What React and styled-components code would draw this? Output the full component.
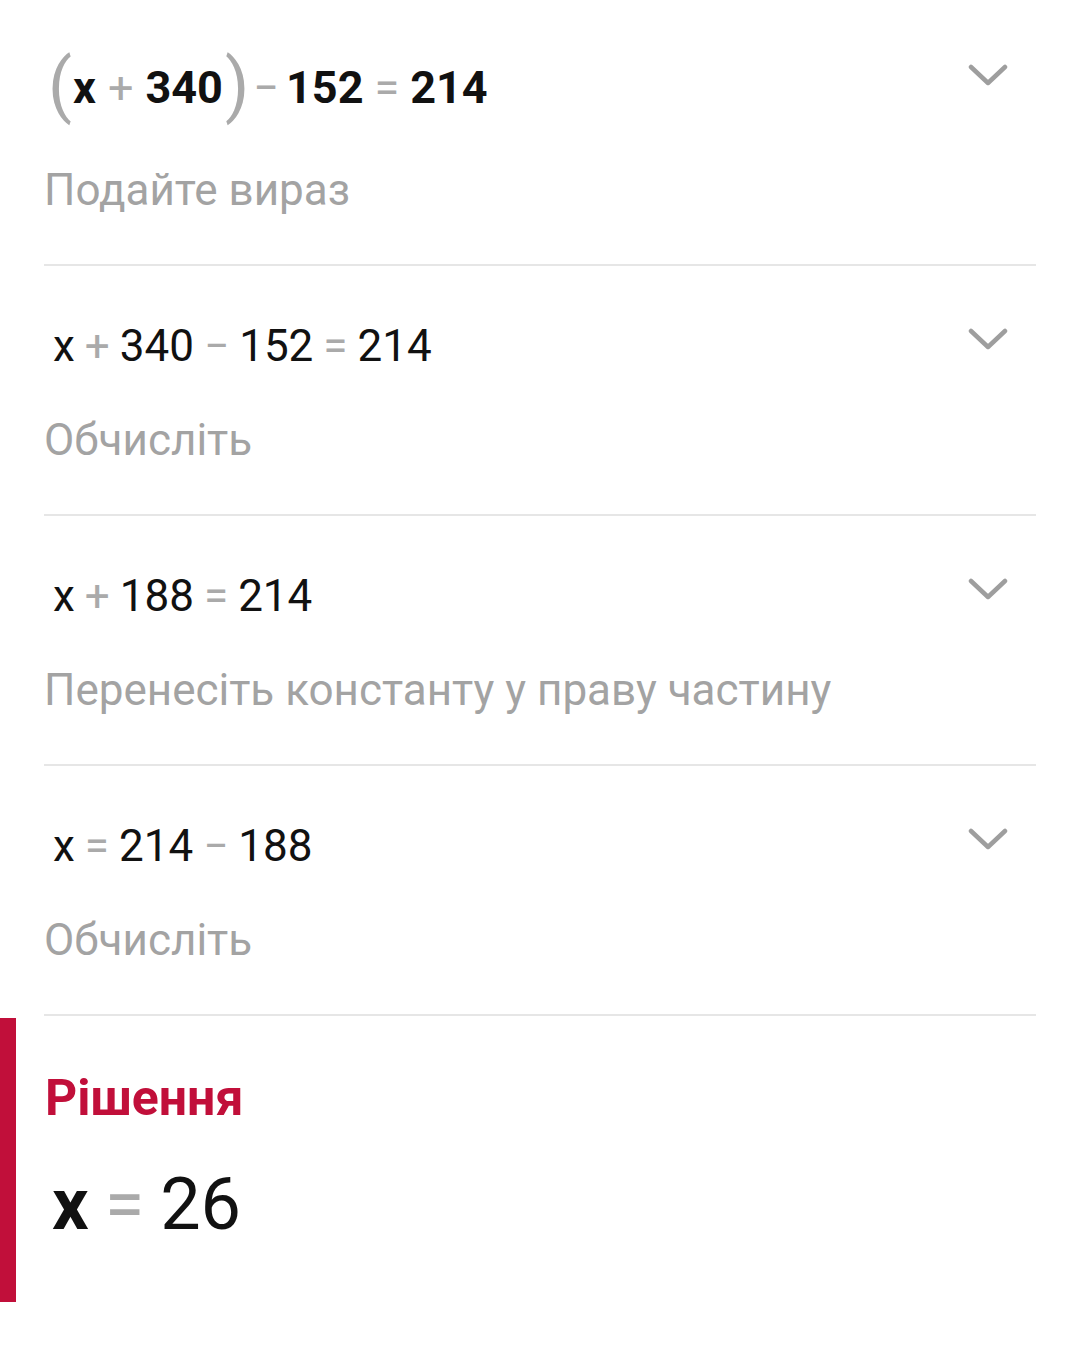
import React from "react";
import styled, { createGlobalStyle } from "styled-components";

const Global = createGlobalStyle`
  html, body { margin: 0; padding: 0; background: #fff; }
  body { font-family: Roboto, "Noto Sans", Arial, sans-serif; color: #111; }
`;

const Page = styled.div`
  width: 1080px;
  min-height: 1348px;
  background: #fff;
`;

const Steps = styled.div`
  padding: 0 44px;
`;

const Step = styled.section`
  border-bottom: 2px solid #e6e6e6;
  padding: ${(p) => (p.$first ? "38px 0 44px" : "50px 0 44px")};
`;

const Head = styled.div`
  display: flex;
  align-items: flex-start;
  justify-content: space-between;
`;

const Math = styled.div`
  display: flex;
  align-items: center;
  font-size: ${(p) => (p.$bold ? "45px" : "44px")};
  font-weight: ${(p) => (p.$bold ? 700 : 400)};
  line-height: ${(p) => (p.$bold ? "100px" : "60px")};
  padding-left: ${(p) => (p.$bold ? "4px" : "9px")};
  color: #111;
  white-space: pre;
`;

const Op = styled.span`
  color: #aaa;
  font-weight: 400;
  margin: ${(p) => p.$m || "0 10px"};
`;

const Paren = styled.span`
  color: #aaa;
  font-weight: 400;
  font-size: 70px;
  line-height: 100px;
  display: inline-block;
  margin: ${(p) => p.$m};
  position: relative;
  top: -3px;
`;

const Chevron = styled.button`
  border: 0;
  background: none;
  padding: 0;
  margin: ${(p) => (p.$first ? "26px 28px 0 0" : "12px 28px 0 0")};
  width: 40px;
  height: 22px;
  display: flex;
  cursor: pointer;
`;

const Hint = styled.div`
  font-size: 44px;
  line-height: 60px;
  color: #a3a3a3;
  margin-top: ${(p) => (p.$first ? "22px" : "34px")};
`;

const Solution = styled.section`
  margin-top: 2px;
  border-left: 16px solid #c10f3a;
  padding: 50px 0 44px 29px;
  height: 284px;
  box-sizing: border-box;
`;

const SolTitle = styled.h2`
  margin: 0;
  font-size: 50px;
  font-weight: 700;
  line-height: 60px;
  color: #c10f3a;
`;

const Answer = styled.div`
  margin-top: 32px;
  padding-left: 7px;
  font-size: 72px;
  line-height: 90px;
  color: #111;
  display: flex;
  align-items: center;
`;

const AnsX = styled.span`
  font-weight: 700;
`;

const AnsEq = styled.span`
  color: #aaa;
  margin: 0 16px;
`;

const ChevronIcon = () => (
  <svg width="40" height="22" viewBox="0 0 40 22" fill="none">
    <path d="M3 3 L20 19 L37 3" stroke="#9e9e9e" strokeWidth="4.5" strokeLinecap="round" strokeLinejoin="round" />
  </svg>
);

const O = ({ children, m }) => <Op $m={m}>{children}</Op>;

export default function App() {
  return (
    <Page>
      <Global />
      <Steps>
        <Step $first>
          <Head>
            <Math $bold>
              <Paren $m="0 1px 0 0">(</Paren>
              x<O m="0 12px">+</O>340
              <Paren $m="0 0 0 2px">)</Paren>
              <O m="0 7px 0 4px">−</O>152<O m="0 11px">=</O>214
            </Math>
            <Chevron $first aria-label="expand"><ChevronIcon /></Chevron>
          </Head>
          <Hint $first>Подайте вираз</Hint>
        </Step>
        <Step>
          <Head>
            <Math>
              x<O>+</O>340<O>−</O>152<O>=</O>214
            </Math>
            <Chevron aria-label="expand"><ChevronIcon /></Chevron>
          </Head>
          <Hint>Обчисліть</Hint>
        </Step>
        <Step>
          <Head>
            <Math>
              x<O>+</O>188<O>=</O>214
            </Math>
            <Chevron aria-label="expand"><ChevronIcon /></Chevron>
          </Head>
          <Hint>Перенесіть константу у праву частину</Hint>
        </Step>
        <Step>
          <Head>
            <Math>
              x<O>=</O>214<O>−</O>188
            </Math>
            <Chevron aria-label="expand"><ChevronIcon /></Chevron>
          </Head>
          <Hint>Обчисліть</Hint>
        </Step>
      </Steps>
      <Solution>
        <SolTitle>Рішення</SolTitle>
        <Answer>
          <AnsX>x</AnsX>
          <AnsEq>=</AnsEq>
          26
        </Answer>
      </Solution>
    </Page>
  );
}
